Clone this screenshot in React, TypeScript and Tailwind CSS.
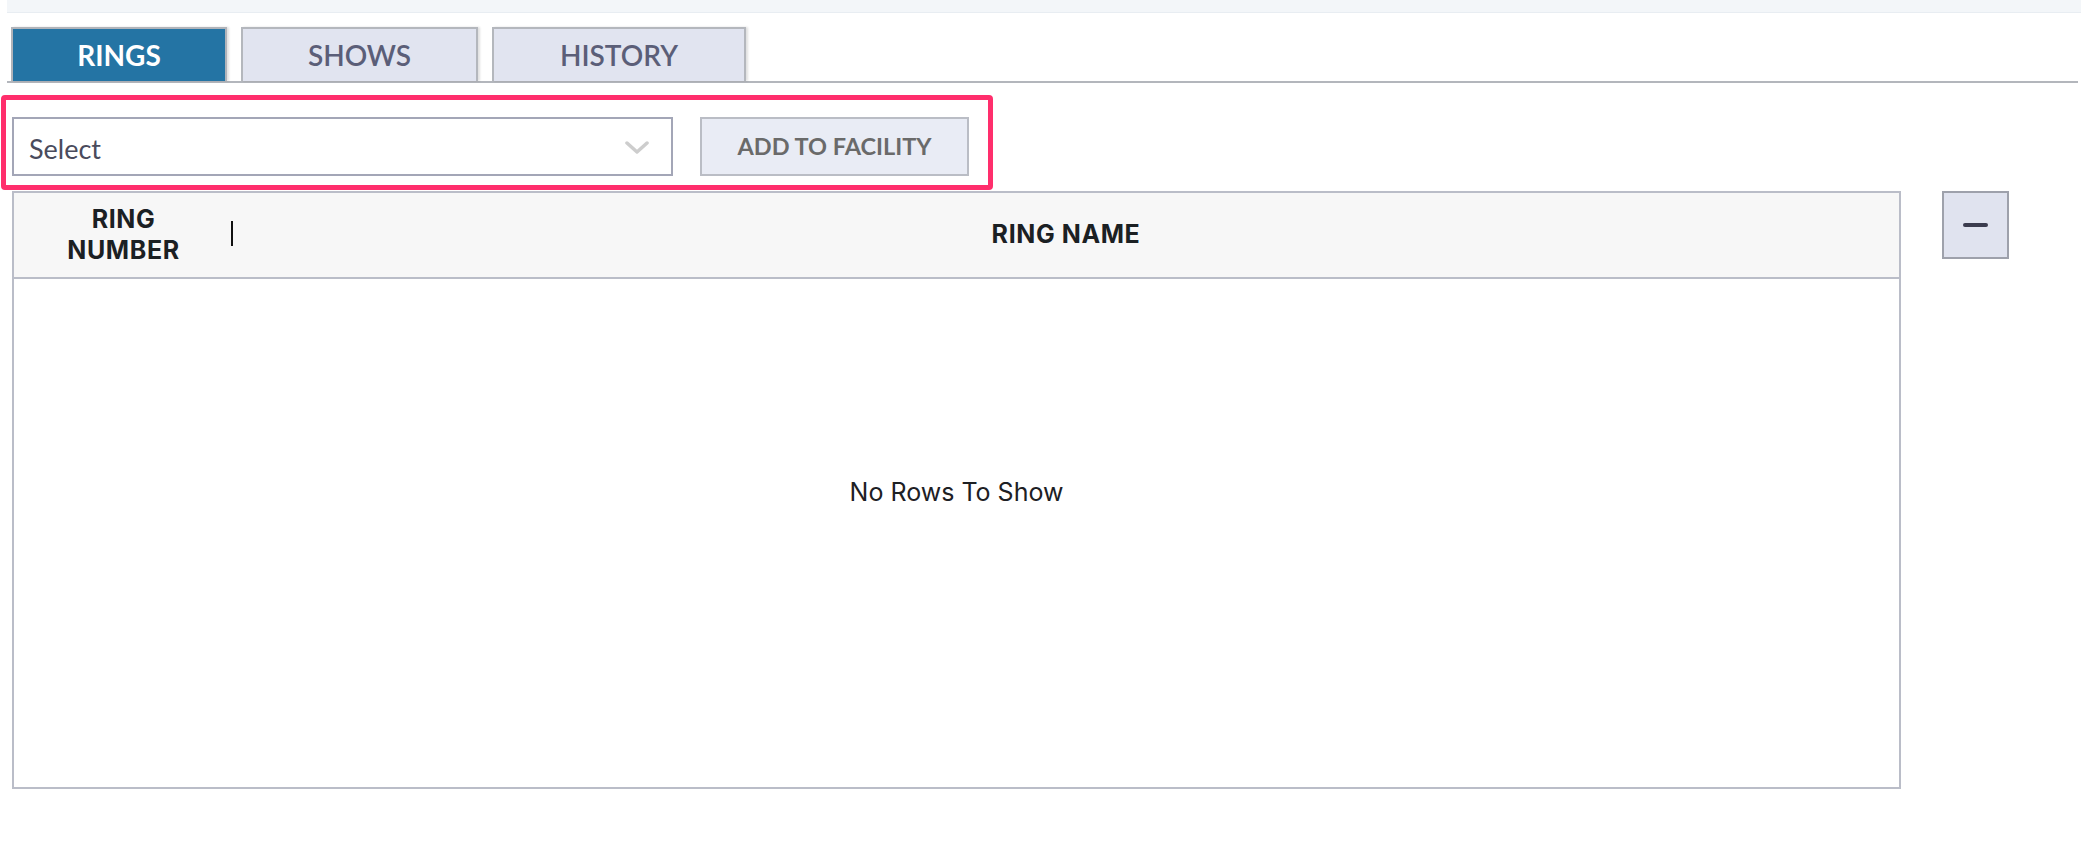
import React from "react";

const lato = "font-['Lato','Liberation_Sans',sans-serif]";
const inter = "font-['Inter','Liberation_Sans',sans-serif]";

export default function App() {
  return (
    <div className="w-[2081px] h-[846px] bg-white overflow-hidden">
      <div className="ml-[7px] h-[13px] bg-[#f3f6f9] border-b border-[#e8edf2]" />
      <div className={`mt-[14px] ml-[7px] mr-[3px] flex items-end gap-[14px] border-b-2 border-[#b3b6bc] pl-[4px] ${lato}`}>
        <div className="w-[216px] h-[54px] flex items-center justify-center bg-[#2474a4] border-2 border-b-0 border-[#b0b3b9] text-white text-[28px] font-bold shadow-[2px_0_2px_rgba(0,0,0,0.12)]">
          RINGS
        </div>
        <div className="w-[237px] h-[54px] flex items-center justify-center bg-[#e1e4f0] border-2 border-b-0 border-[#b4b7bd] text-[#5b5e78] text-[28px] font-semibold shadow-[2px_0_2px_rgba(0,0,0,0.12)]">
          SHOWS
        </div>
        <div className="w-[254px] h-[54px] flex items-center justify-center bg-[#e1e4f0] border-2 border-b-0 border-[#b4b7bd] text-[#5b5e78] text-[28px] font-semibold shadow-[2px_0_2px_rgba(0,0,0,0.12)]">
          HISTORY
        </div>
      </div>

      <div className="mt-[12px] ml-[1px] w-[992px] h-[95px] border-[5px] border-[#ff2e6c] rounded-[4px] pl-[6px] pt-[17px] flex items-start gap-[27px]">
        <div className={`w-[661px] h-[59px] border-2 border-[#a3a6b7] bg-white flex items-center justify-between pl-[15px] pr-[22px] ${lato}`}>
          <span className="text-[27px] text-[#4a4b5c] mt-[5px]">Select</span>
          <svg width="24" height="14" viewBox="0 0 24 14" className="mt-[2px]">
            <polyline points="2,2 12,11 22,2" fill="none" stroke="#cdcdcd" strokeWidth="3.5" strokeLinecap="round" strokeLinejoin="round" />
          </svg>
        </div>
        <button className={`w-[269px] h-[59px] border-2 border-[#babdc5] bg-[#e9ecf5] text-[#6a6a6a] text-[23.5px] font-bold flex items-center justify-center ${lato}`}>
          ADD TO FACILITY
        </button>
      </div>

      <div className="mt-[1px] ml-[12px] flex items-start gap-[41px]">
        <div className={`relative w-[1889px] h-[598px] border-2 border-[#babdc8] flex flex-col ${inter}`}>
          <div className="h-[86px] shrink-0 bg-[#f7f7f7] border-b-2 border-[#babdc8] flex items-center">
            <div className="relative w-[219px] h-full flex items-center justify-center">
              <div className="text-center text-[25px] font-bold leading-[31px] tracking-[0.6px] text-[#1b2023]">
                RING
                <br />
                NUMBER
              </div>
              <div className="absolute right-0 top-[28px] w-[2px] h-[25px] bg-[#111]" />
            </div>
            <div className="flex-1 flex items-center justify-center text-[25px] font-bold tracking-[0.6px] text-[#1b2023]">
              RING NAME
            </div>
          </div>
          <div className="flex-1 bg-white" />
          <div className="absolute inset-0 flex items-center justify-center pointer-events-none">
            <span className="text-[25px] text-[#1d2024] mt-[6px]">No Rows To Show</span>
          </div>
        </div>
        <button className="w-[67px] h-[68px] border-2 border-[#9ea1ab] bg-[#e0e3ef] flex items-center justify-center">
          <div className="w-[25px] h-[4px] rounded-full bg-[#3b3c4e]" />
        </button>
      </div>
    </div>
  );
}
